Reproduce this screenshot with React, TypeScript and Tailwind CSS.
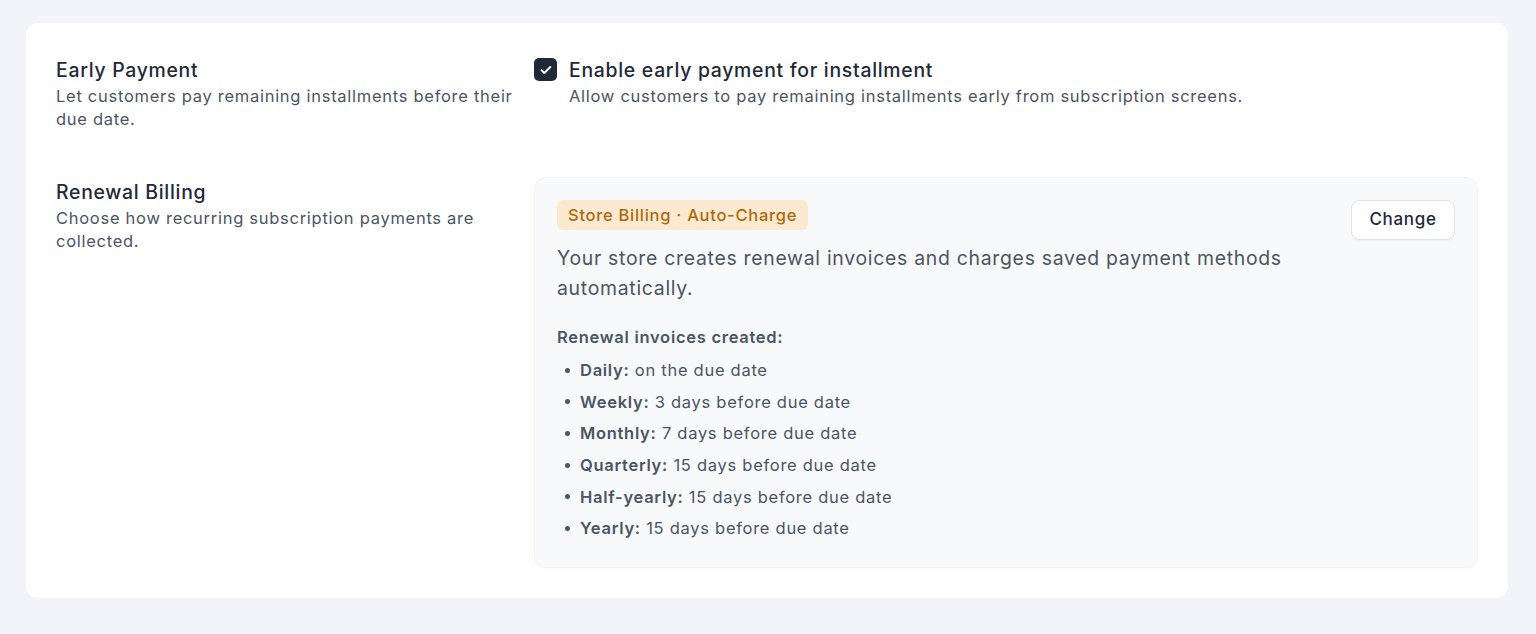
import React from "react";

const schedule: { label: string; text: string }[] = [
  { label: "Daily:", text: "on the due date" },
  { label: "Weekly:", text: "3 days before due date" },
  { label: "Monthly:", text: "7 days before due date" },
  { label: "Quarterly:", text: "15 days before due date" },
  { label: "Half-yearly:", text: "15 days before due date" },
  { label: "Yearly:", text: "15 days before due date" },
];

function SectionLabel({ title, description }: { title: string; description: string }) {
  return (
    <div className="w-[470px]">
      <h3 className="text-[19.4px] leading-[30px] font-medium text-[#1f2937]">{title}</h3>
      <p className="text-[16.5px] leading-[23px] text-[#4b5563]">{description}</p>
    </div>
  );
}

export default function App() {
  return (
    <div
      className="min-h-screen bg-[#f3f4fa] pl-[26px] pr-[28px] pt-[23px] pb-[34px] tracking-[0.045em]"
      style={{ fontFamily: "Inter, 'Noto Sans', sans-serif" }}
    >
      <div className="rounded-[12px] bg-white px-[30px] pt-[32px] pb-[30px] flex flex-col gap-[46px]">
        {/* Early payment */}
        <div className="grid grid-cols-[478px_1fr]">
          <SectionLabel
            title="Early Payment"
            description="Let customers pay remaining installments before their due date."
          />
          <div className="flex gap-[12px]">
            <div className="mt-[3px] flex h-[23px] w-[23px] shrink-0 items-center justify-center rounded-[5px] bg-[#1f2937]">
              <svg width="16" height="16" viewBox="0 0 24 24" fill="none" stroke="white" strokeWidth="3" strokeLinecap="round" strokeLinejoin="round">
                <path d="M5.5 12.5l4 4L18.5 7.5" />
              </svg>
            </div>
            <div>
              <div className="text-[19.4px] leading-[30px] font-medium text-[#1f2937]">
                Enable early payment for installment
              </div>
              <div className="text-[16.5px] leading-[23px] text-[#4b5563]">
                Allow customers to pay remaining installments early from subscription screens.
              </div>
            </div>
          </div>
        </div>

        {/* Renewal billing */}
        <div className="grid grid-cols-[478px_1fr]">
          <div className="mt-0">
            <SectionLabel
              title="Renewal Billing"
              description="Choose how recurring subscription payments are collected."
            />
          </div>
          <div className="rounded-[12px] border border-[#f3f4f7] bg-[#f8f9fb] pl-[22px] pr-[22px] pt-[22px] pb-[27px] shadow-[0_1px_3px_rgba(15,23,42,0.025)]">
            <div className="flex items-start justify-between gap-[16px]">
              <div className="flex-1">
                <span className="inline-flex h-[30px] items-center rounded-[6px] bg-[#fde9cf] px-[11px] text-[16.5px] font-medium text-[#ad6912]">
                  Store Billing · Auto-Charge
                </span>
                <p className="mt-[13px] max-w-[780px] text-[19.4px] leading-[30px] text-[#4b5563]">
                  Your store creates renewal invoices and charges saved payment methods automatically.
                </p>
              </div>
              <button className="h-[40px] w-[104px] shrink-0 rounded-[8px] border border-[#e1e3e8] bg-white text-[17px] font-medium tracking-[0.04em] text-[#1f2937] shadow-[0_1px_2px_rgba(0,0,0,0.03)]">
                Change
              </button>
            </div>
            <div className="mt-[22px] text-[16.5px] leading-[24px] font-semibold text-[#4b5563]">
              Renewal invoices created:
            </div>
            <ul className="mt-[9px] flex flex-col gap-[7.7px]">
              {schedule.map((item) => (
                <li key={item.label} className="flex items-center text-[16.5px] leading-[24px] text-[#4b5563]">
                  <span className="ml-[8px] mr-[10px] h-[5px] w-[5px] rounded-full bg-[#4b5563]" />
                  <span>
                    <span className="font-semibold">{item.label}</span> {item.text}
                  </span>
                </li>
              ))}
            </ul>
          </div>
        </div>
      </div>
    </div>
  );
}
